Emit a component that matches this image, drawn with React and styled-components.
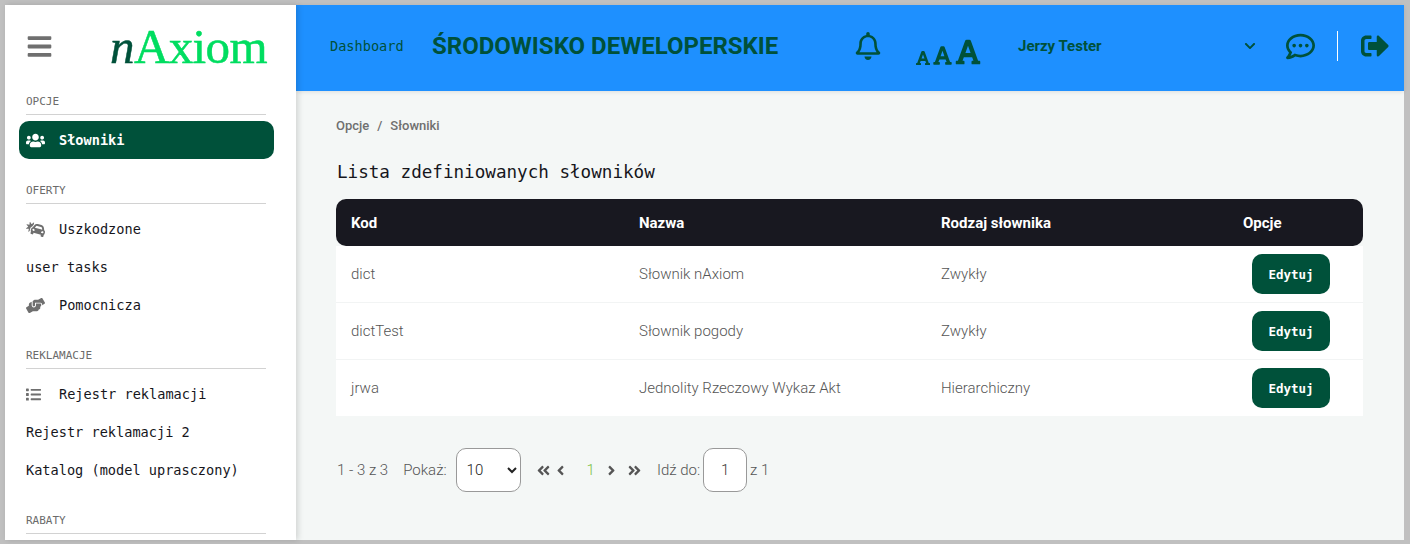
import styled, { createGlobalStyle } from "styled-components";
import {
  FaAngleDoubleLeft,
  FaAngleDoubleRight,
  FaAngleLeft,
  FaAngleRight,
  FaBars,
  FaCarCrash,
  FaChevronDown,
  FaFont,
  FaHandsHelping,
  FaList,
  FaRegBell,
  FaRegCommentDots,
  FaSignOutAlt,
  FaUsers,
} from "react-icons/fa";

const MONO = `"DejaVu Sans Mono", "Liberation Mono", monospace`;
const GREEN = "#00513a";

const GlobalStyle = createGlobalStyle`
  html, body {
    margin: 0;
    height: 100%;
    overflow: hidden;
  }
  body {
    font-family: Roboto, sans-serif;
    background: #c0c0c0;
  }
`;

const Frame = styled.div`
  box-sizing: border-box;
  width: 1410px;
  height: 544px;
  padding: 5px 6px 4px 5px;
  display: flex;
`;
const Sidebar = styled.aside`
  width: 291px;
  flex: none;
  background: #fff;
  box-shadow: 2px 0 6px rgba(0, 0, 0, 0.15);
  overflow: hidden;
  padding: 0 30px 0 21px;
  box-sizing: border-box;
  position: relative;
  z-index: 1;
`;
const LogoRow = styled.div`
  box-sizing: border-box;
  height: 65px;
  padding-top: 17px;
  display: flex;
  align-items: center;
  justify-content: space-between;
  color: #6f6f6f;
  font-size: 27px;
`;
const Logo = styled.div`
  font-family: "Liberation Serif", serif;
  font-size: 49px;
  line-height: 45px;
  color: #00dd60;
  letter-spacing: -0.6px;
  -webkit-text-stroke: 0.5px #00dd60;
  margin-right: -1px;
  em {
    color: ${GREEN};
    -webkit-text-stroke: 0.5px ${GREEN};
  }
`;
const SectionLabel = styled.div`
  box-sizing: border-box;
  height: 45px;
  display: flex;
  align-items: flex-end;
  padding-bottom: 5px;
  margin-bottom: 6px;
  border-bottom: 1px solid #d2d2d2;
  font-family: ${MONO};
  font-size: 11px;
  line-height: 14px;
  color: #6b6b6b;
`;
const NavItem = styled.div`
  height: 38px;
  display: flex;
  align-items: center;
  margin: ${(p) => (p.$active ? "1px -8px 0 -7px" : "0")};
  padding: ${(p) => (p.$active ? "0 8px 0 7px" : "0")};
  border-radius: 10px;
  background: ${(p) => (p.$active ? GREEN : "transparent")};
  color: ${(p) => (p.$active ? "#fff" : "#16161c")};
  font-family: ${MONO};
  font-size: 13.6px;
  font-weight: ${(p) => (p.$active ? 700 : 400)};
  white-space: nowrap;
`;
const NavIcon = styled.span`
  width: 33px;
  flex: none;
  display: flex;
  align-items: center;
  font-size: ${(p) => p.$size || 19}px;
  color: ${(p) => (p.$active ? "#fff" : "#6f6f6f")};
`;
const Main = styled.main`
  flex: 1;
  min-width: 0;
  background: #f4f7f6;
  display: flex;
  flex-direction: column;
`;
const TopBar = styled.header`
  box-sizing: border-box;
  height: 86px;
  flex: none;
  padding: 0 15px 4px 34px;
  background: #1e90ff;
  color: ${GREEN};
  display: flex;
  align-items: center;
  box-shadow: 0 1px 4px rgba(0, 0, 0, 0.1);
`;
const DashboardLink = styled.span`
  font-family: ${MONO};
  font-size: 13.6px;
  width: 102px;
  flex: none;
`;
const EnvTitle = styled.h1`
  margin: 0;
  width: 422px;
  flex: none;
  font-size: 24px;
  font-weight: 700;
  white-space: nowrap;
`;
const BarIcon = styled.span`
  display: flex;
  flex: none;
  font-size: ${(p) => p.$size}px;
  margin-left: ${(p) => p.$left || 0}px;
`;
const FontSizes = styled.div`
  display: flex;
  align-items: flex-end;
  gap: 1px;
  margin: 10px 0 0 33px;
  width: 67px;
  height: 30px;
  flex: none;
`;
const UserName = styled.span`
  margin-left: 36px;
  width: 226px;
  flex: none;
  font-size: 15px;
  font-weight: 700;
`;
const Divider = styled.span`
  width: 1px;
  height: 30px;
  flex: none;
  background: #fff;
  margin: 0 23px 0 22px;
`;
const Content = styled.div`
  flex: 1;
  padding: 28px 41px 0 40px;
`;
const Breadcrumb = styled.div`
  display: flex;
  gap: 8px;
  font-size: 13px;
  font-weight: 500;
  line-height: 14px;
  color: #6f6f6f;
`;
const Heading = styled.h2`
  margin: 27px 0 15px 1px;
  font-family: ${MONO};
  font-size: 17.6px;
  line-height: 24px;
  font-weight: 400;
  color: #16161c;
`;
const Table = styled.table`
  width: 100%;
  table-layout: fixed;
  border-collapse: separate;
  border-spacing: 0;
  font-size: 15px;
`;
const HeadCell = styled.th`
  box-sizing: border-box;
  width: ${(p) => p.$width}px;
  height: 47px;
  padding: 0 0 0 15px;
  background: #181820;
  color: #fff;
  font-weight: 700;
  text-align: left;
  &:first-child {
    border-radius: 10px 0 0 10px;
  }
  &:last-child {
    border-radius: 0 10px 10px 0;
  }
`;
const Cell = styled.td`
  height: 56px;
  padding: 0 0 0 15px;
  background: #fff;
  color: #555;
  font-weight: 300;
  border-bottom: 1px solid #f2f4f4;
  tr:last-child & {
    border-bottom: none;
  }
`;
const EditButton = styled.button`
  display: block;
  width: 78px;
  height: 40px;
  margin-left: 9px;
  border: none;
  border-radius: 10px;
  background: ${GREEN};
  color: #fff;
  font-family: ${MONO};
  font-size: 12.5px;
  font-weight: 700;
  padding: 0;
`;
const Pagination = styled.div`
  display: flex;
  align-items: center;
  margin: 32px 0 0 1px;
  font-size: 15px;
  font-weight: 300;
  color: #555;
`;
const PageLabel = styled.span`
  margin-left: ${(p) => p.$left || 0}px;
`;
const PageSelect = styled.select`
  box-sizing: border-box;
  width: 65px;
  height: 44px;
  margin: 0 15px 0 9px;
  padding: 0 0 0 6px;
  border: 1px solid #999;
  border-radius: 10px;
  background: #fff;
  font-family: Roboto, sans-serif;
  font-size: 15px;
  font-weight: 300;
  color: #222;
`;
const PageArrow = styled.span`
  display: flex;
  flex: none;
  font-size: 15px;
  color: #555;
  margin-left: ${(p) => p.$left || 0}px;
`;
const CurrentPage = styled.span`
  margin-left: 19px;
  color: #7cc243;
`;
const PageInput = styled.input`
  box-sizing: border-box;
  width: 44px;
  height: 44px;
  margin: 0 3px;
  padding: 0;
  border: 1px solid #999;
  border-radius: 10px;
  background: #fff;
  text-align: center;
  font-family: Roboto, sans-serif;
  font-size: 15px;
  font-weight: 300;
  color: #333;
`;

const rows = [
  ["dict", "Słownik nAxiom", "Zwykły"],
  ["dictTest", "Słownik pogody", "Zwykły"],
  ["jrwa", "Jednolity Rzeczowy Wykaz Akt", "Hierarchiczny"],
];

const App = () => (
  <Frame>
    <GlobalStyle />
    <Sidebar>
      <LogoRow>
        <FaBars />
        <Logo>
          <em>n</em>Axiom
        </Logo>
      </LogoRow>
      <SectionLabel>OPCJE</SectionLabel>
      <NavItem $active>
        <NavIcon $active>
          <FaUsers />
        </NavIcon>
        Słowniki
      </NavItem>
      <SectionLabel>OFERTY</SectionLabel>
      <NavItem>
        <NavIcon>
          <FaCarCrash />
        </NavIcon>
        Uszkodzone
      </NavItem>
      <NavItem>user tasks</NavItem>
      <NavItem>
        <NavIcon>
          <FaHandsHelping />
        </NavIcon>
        Pomocnicza
      </NavItem>
      <SectionLabel>REKLAMACJE</SectionLabel>
      <NavItem>
        <NavIcon $size={15}>
          <FaList />
        </NavIcon>
        Rejestr reklamacji
      </NavItem>
      <NavItem>Rejestr reklamacji 2</NavItem>
      <NavItem>Katalog (model uprasczony)</NavItem>
      <SectionLabel>RABATY</SectionLabel>
    </Sidebar>
    <Main>
      <TopBar>
        <DashboardLink>Dashboard</DashboardLink>
        <EnvTitle>ŚRODOWISKO DEWELOPERSKIE</EnvTitle>
        <BarIcon $size={28}>
          <FaRegBell />
        </BarIcon>
        <FontSizes>
          <BarIcon $size={16}>
            <FaFont />
          </BarIcon>
          <BarIcon $size={21}>
            <FaFont />
          </BarIcon>
          <BarIcon $size={28}>
            <FaFont />
          </BarIcon>
        </FontSizes>
        <UserName>Jerzy Tester</UserName>
        <BarIcon $size={12}>
          <FaChevronDown />
        </BarIcon>
        <BarIcon $size={29} $left={30}>
          <FaRegCommentDots />
        </BarIcon>
        <Divider />
        <BarIcon $size={28}>
          <FaSignOutAlt />
        </BarIcon>
      </TopBar>
      <Content>
        <Breadcrumb>
          <span>Opcje</span>
          <span>/</span>
          <span>Słowniki</span>
        </Breadcrumb>
        <Heading>Lista zdefiniowanych słowników</Heading>
        <Table>
          <thead>
            <tr>
              <HeadCell $width={288}>Kod</HeadCell>
              <HeadCell $width={302}>Nazwa</HeadCell>
              <HeadCell $width={302}>Rodzaj słownika</HeadCell>
              <HeadCell>Opcje</HeadCell>
            </tr>
          </thead>
          <tbody>
            {rows.map(([code, name, kind]) => (
              <tr key={code}>
                <Cell>{code}</Cell>
                <Cell>{name}</Cell>
                <Cell>{kind}</Cell>
                <Cell>
                  <EditButton>Edytuj</EditButton>
                </Cell>
              </tr>
            ))}
          </tbody>
        </Table>
        <Pagination>
          <PageLabel>1 - 3 z 3</PageLabel>
          <PageLabel $left={15}>Pokaż:</PageLabel>
          <PageSelect defaultValue="10">
            <option>10</option>
            <option>25</option>
            <option>50</option>
          </PageSelect>
          <PageArrow>
            <FaAngleDoubleLeft />
          </PageArrow>
          <PageArrow $left={2}>
            <FaAngleLeft />
          </PageArrow>
          <CurrentPage>1</CurrentPage>
          <PageArrow $left={9}>
            <FaAngleRight />
          </PageArrow>
          <PageArrow $left={8}>
            <FaAngleDoubleRight />
          </PageArrow>
          <PageLabel $left={15}>Idź do:</PageLabel>
          <PageInput defaultValue="1" />
          <PageLabel>z 1</PageLabel>
        </Pagination>
      </Content>
    </Main>
  </Frame>
);

export default App;
